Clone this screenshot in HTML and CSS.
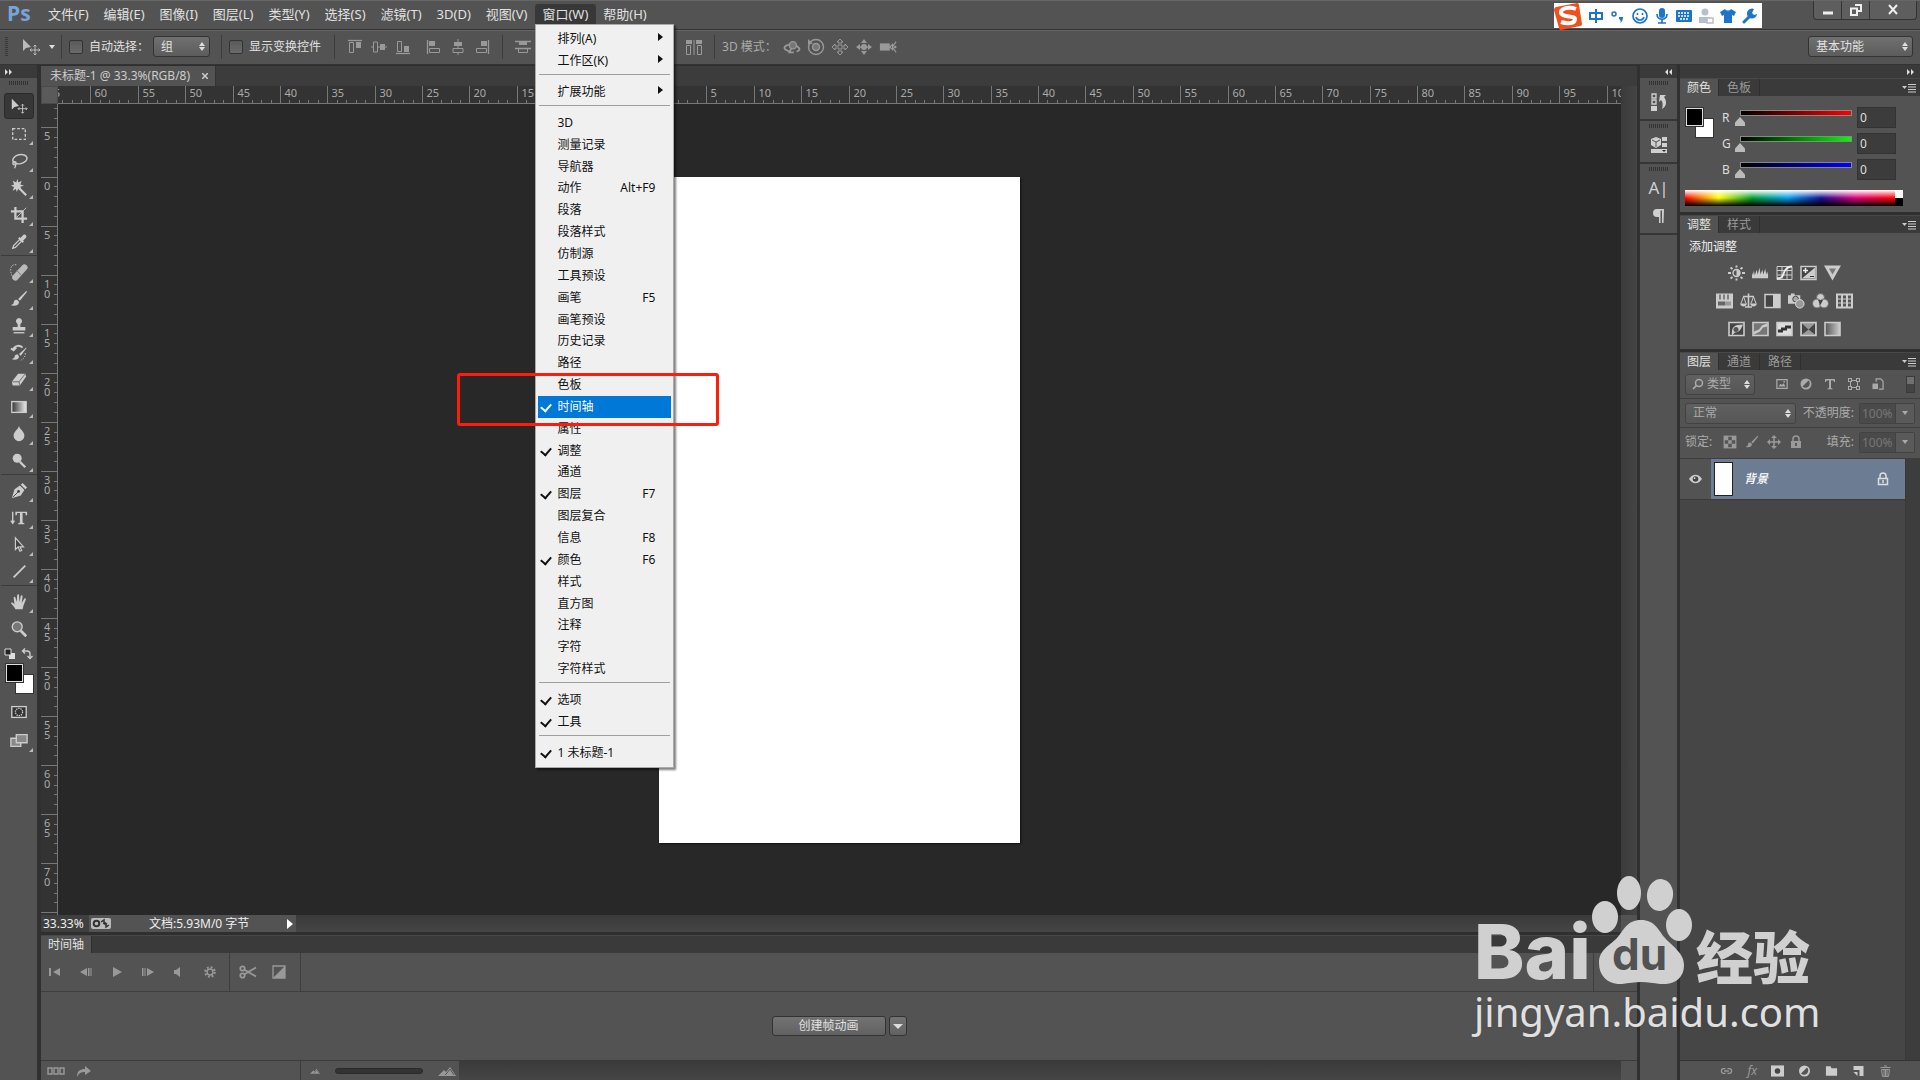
FILE: index.html
```html
<!DOCTYPE html>
<html lang="zh-CN">
<head>
<meta charset="utf-8">
<title>未标题-1 @ 33.3%(RGB/8)</title>
<link rel="stylesheet" href="styles.css">
</head>
<body>
<svg class="sprite" aria-hidden="true">
  <symbol id="i-move" viewBox="0 0 20 20"><path d="M2 2v12l3-3 5-1z" fill="currentColor"/><path d="M14 8v10M9 13h10M12.500 9.500l1.500-1.500 1.500 1.500M12.500 16.500l1.500 1.500 1.500-1.500M10.500 11.500L9 13l1.500 1.500M17.500 11.500L19 13l-1.500 1.500" fill="none" stroke="currentColor"/></symbol>
  <symbol id="i-marquee" viewBox="0 0 20 20"><rect x="3" y="4" width="14" height="12" fill="none" stroke="currentColor" stroke-width="1.500" stroke-dasharray="3 2"/></symbol>
  <symbol id="i-lasso" viewBox="0 0 20 20"><g fill="none" stroke="currentColor" stroke-width="1.600"><ellipse cx="11" cy="8" rx="8" ry="5" transform="rotate(-12 11 8)"/><circle cx="5" cy="12.500" r="1.800"/><path d="M6 14c1 2 0 3-1 4"/></g></symbol>
  <symbol id="i-wand" viewBox="0 0 20 20"><path d="M8 0l1.500 4L13 2l-1.500 4 4 1.500-4 1L13 13l-4-2-1.500 3.500L6.500 11 3 13l1.500-4L1 7.500 4.500 6 3 2l4 2z" fill="currentColor"/><path d="M10 10l8 8" stroke="currentColor" stroke-width="2.500"/></symbol>
  <symbol id="i-crop" viewBox="0 0 20 20"><path d="M6 1v13h13M1 6h13v13" fill="none" stroke="currentColor" stroke-width="2.500"/><path d="M7 13L18 2" stroke="currentColor"/></symbol>
  <symbol id="i-eyedrop" viewBox="0 0 20 20"><path d="M3 17l1-3 7-7 2 2-7 7z" fill="none" stroke="currentColor" stroke-width="1.400"/><path d="M9 6l5 5 1.500-1.500-1-1L18 5c1-2-1-4-3-3l-3.500 3.500-1-1z" fill="currentColor"/></symbol>
  <symbol id="i-heal" viewBox="0 0 20 20"><path d="M6 16L16 5" stroke="currentColor" stroke-width="7" stroke-linecap="round" opacity=".85"/><path d="M7 8l6 6" stroke="#777"/><path d="M7 2C2 1 0 5 1 10s2 5 3 6" fill="none" stroke="currentColor" stroke-dasharray="1.500 1.500"/></symbol>
  <symbol id="i-brush" viewBox="0 0 20 20"><path d="M18 1L9 10l2 2 8-10z" fill="currentColor"/><path d="M8 11c-3-1-4 2-4 4l-3 2c3 1 9 1 9-4z" fill="currentColor"/></symbol>
  <symbol id="i-stamp" viewBox="0 0 20 20"><path d="M10 1a3.500 3.500 0 0 1 3 5l-1.500 2v3H17v4H3v-4h5.500V8L7 6a3.500 3.500 0 0 1 3-5z" fill="currentColor"/><path d="M4 17.500h12" stroke="currentColor" stroke-width="1.500"/></symbol>
  <symbol id="i-history" viewBox="0 0 20 20"><path d="M18 4l-8 7 2 2 6-8z" fill="currentColor"/><path d="M9 12c-3-1-4 1-4 3l-3 2c3 1 8 1 8-3z" fill="currentColor"/><path d="M3 6c3-5 8-5 11-2M1 5l3 2 3-3" fill="none" stroke="currentColor" stroke-width="2"/><path d="M17 10c0 4-1 6-5 8" fill="none" stroke="currentColor" stroke-dasharray="1.500 1.500"/></symbol>
  <symbol id="i-eraser" viewBox="0 0 20 20"><path d="M9 3h8l1 3-7 10H3l-1-4z" fill="currentColor"/><path d="M2.500 12H10l7-9M10 12l1 4" fill="none" stroke="#666"/></symbol>
  <symbol id="i-gradient" viewBox="0 0 20 20"><defs><linearGradient id="g1"><stop stop-color="#333"/><stop offset="1" stop-color="#eee"/></linearGradient></defs><rect x="2" y="4" width="16" height="12" fill="url(#g1)" stroke="currentColor" stroke-width="1.500"/></symbol>
  <symbol id="i-drop" viewBox="0 0 20 20"><path d="M10 1c1 4 6 6 6 11a6 6 0 0 1-12 0c0-5 5-7 6-11z" fill="currentColor"/></symbol>
  <symbol id="i-dodge" viewBox="0 0 20 20"><circle cx="8" cy="7" r="5" fill="currentColor"/><path d="M11 11l6 6" stroke="currentColor" stroke-width="2.500"/></symbol>
  <symbol id="i-pen" viewBox="0 0 20 20"><path d="M2 18L5 8l6-4 5 5-4 6zM12 3l2-2 5 5-2 2z" fill="currentColor"/><path d="M3 17l6-6" stroke="#444"/><circle cx="9.500" cy="10.500" r="1.500" fill="#444"/></symbol>
  <symbol id="i-vtype" viewBox="0 0 20 20"><path d="M3 3v12M1 13l2 3 2-3" fill="none" stroke="currentColor" stroke-width="1.500"/><path d="M6 3h13v4h-1.500L17 4.500h-3V15l2 1v1H9v-1l2-1V4.500H8L7.500 7H6z" fill="currentColor"/></symbol>
  <symbol id="i-arrow" viewBox="0 0 20 20"><path d="M6 2v13l3-3 2 5 2-1-2-4h4z" fill="#444" stroke="currentColor" stroke-width="1.300"/></symbol>
  <symbol id="i-line" viewBox="0 0 20 20"><path d="M4 16L17 3" stroke="currentColor" stroke-width="2"/></symbol>
  <symbol id="i-hand" viewBox="0 0 20 20"><path d="M6 18c-1-3-4-5-5-7 1-1 3 0 4 2L4 5c1-1 2-1 2 0l1.500 5L8 2c1-1 2-1 2 0l.5 8L12 3c1-1 2 0 2 1l-1 7 3-5c1-.5 2 0 1.500 1.500L15 14l-1 4z" fill="currentColor"/></symbol>
  <symbol id="i-zoom" viewBox="0 0 20 20"><circle cx="8" cy="7.500" r="5.500" fill="#777" stroke="currentColor" stroke-width="1.500"/><path d="M12 12l6 6" stroke="currentColor" stroke-width="3"/></symbol>
  <symbol id="i-mini" viewBox="0 0 12 12"><path d="M5 5h6v6H5z" fill="#ddd"/><path d="M1 1h6v6H1z" fill="#222" stroke="#ddd"/></symbol>
  <symbol id="i-swap" viewBox="0 0 12 12"><path d="M2 3h4c2 0 3 1 3 3v4M4 .5L1.500 3 4 5.500M6.500 8L9 10.500 11.500 8" fill="none" stroke="currentColor" stroke-width="1.400"/></symbol>
  <symbol id="i-mask" viewBox="0 0 20 20"><rect x="2" y="4" width="16" height="12" fill="#333" stroke="currentColor" stroke-width="1.500"/><circle cx="10" cy="10" r="4" fill="none" stroke="currentColor" stroke-width="1.500" stroke-dasharray="1.500 1"/></symbol>
  <symbol id="i-screen" viewBox="0 0 20 20"><path d="M1 8h11v9H1z" fill="#888" stroke="currentColor" stroke-width="1.500"/><path d="M7 4h12v9H7z" fill="#888" stroke="currentColor" stroke-width="1.500"/></symbol>
  <symbol id="i-altop" viewBox="0 0 16 16"><path d="M1 1.500h14" stroke="currentColor" stroke-width="1.300"/><path d="M9 3h5v6H9z" fill="currentColor"/><path d="M2.500 3.500h4v10h-4z" fill="none" stroke="currentColor"/></symbol>
  <symbol id="i-almid" viewBox="0 0 16 16"><path d="M0 8h16" stroke="currentColor"/><path d="M9 5h5v6H9z" fill="currentColor"/><path d="M2.500 3h4v10h-4z" fill="#535353" stroke="currentColor"/></symbol>
  <symbol id="i-albot" viewBox="0 0 16 16"><path d="M1 14.500h14" stroke="currentColor" stroke-width="1.300"/><path d="M9 7h5v6H9z" fill="currentColor"/><path d="M2.500 2.500h4v10h-4z" fill="none" stroke="currentColor"/></symbol>
  <symbol id="i-alleft" viewBox="0 0 16 16"><path d="M1.500 1v14" stroke="currentColor" stroke-width="1.300"/><path d="M3 2h6v5H3z" fill="currentColor"/><path d="M3.500 9.500h10v4h-10z" fill="none" stroke="currentColor"/></symbol>
  <symbol id="i-alcen" viewBox="0 0 16 16"><path d="M8 0v16" stroke="currentColor"/><path d="M4 3h8v4H4z" fill="currentColor"/><path d="M3 9.500h10v4H3z" fill="#535353" stroke="currentColor"/></symbol>
  <symbol id="i-alright" viewBox="0 0 16 16"><path d="M14.500 1v14" stroke="currentColor" stroke-width="1.300"/><path d="M7 2h6v5H7z" fill="currentColor"/><path d="M2.500 9.500h10v4h-10z" fill="none" stroke="currentColor"/></symbol>
  <symbol id="i-dist" viewBox="0 0 16 16"><path d="M0 2.500h16M0 9.500h16" stroke="currentColor" stroke-width="1.300"/><path d="M4 3h8v3H4z" fill="currentColor"/><path d="M3.500 10v3.500h9V10" fill="none" stroke="currentColor"/></symbol>
  <symbol id="i-auto" viewBox="0 0 16 16"><path d="M0 1h6v4H0zM10 1h6v4h-6z" fill="currentColor"/><path d="M.5 6.500h4v9h-4zM11.500 6.500h4v9h-4zM8 1v15" fill="none" stroke="currentColor"/></symbol>
  <symbol id="i-orbit" viewBox="0 0 20 16"><circle cx="11" cy="6" r="4" fill="#777" stroke="currentColor" stroke-width="1.500"/><path d="M8 5C2 6 0 9 3 11l4 2M9 10l-2 4h5M15 7c5 3 4 5 0 6" fill="none" stroke="currentColor" stroke-width="2"/></symbol>
  <symbol id="i-roll" viewBox="0 0 18 18"><circle cx="9" cy="9" r="7.500" fill="none" stroke="currentColor" stroke-width="1.400"/><circle cx="9" cy="9" r="3.500" fill="#777" stroke="currentColor" stroke-width="1.400"/><path d="M1 1v5h5z" fill="currentColor"/></symbol>
  <symbol id="i-pan" viewBox="0 0 18 18"><path d="M9 1l3 3h-2v4h4V6l3 3-3 3v-2h-4v4h2l-3 3-3-3h2v-4H4v2L1 9l3-3v2h4V4H6z" fill="none" stroke="currentColor"/></symbol>
  <symbol id="i-slide" viewBox="0 0 18 18"><path d="M9 1l3 4H6zM9 17l3-4H6zM1 9l4-3v6zM17 9l-4-3v6z" fill="currentColor"/><circle cx="9" cy="9" r="3" fill="currentColor"/><path d="M2 9h14" stroke="currentColor" stroke-width="1.500"/></symbol>
  <symbol id="i-cam" viewBox="0 0 20 16"><path d="M1 4h11v8H1z" fill="currentColor"/><path d="M12 8l3-3v6zM19 2l-4 6 4 6" fill="none" stroke="currentColor" stroke-width="1.300"/><circle cx="18" cy="8" r="1.500" fill="currentColor"/></symbol>
  <symbol id="i-list" viewBox="0 0 14 10"><path d="M0 3h5L2.500 6z" fill="currentColor"/><path d="M6 1.500h8M6 4h8M6 6.500h8M6 9h8" stroke="currentColor"/></symbol>
  <symbol id="i-hist" viewBox="0 0 16 18"><path d="M1 1h4v4H1zM1 7h4v4H1z" fill="none" stroke="currentColor" stroke-width="1.300"/><path d="M0 13h6v5H0zM9 2h6l-2 2c3 4 3 9-2 12 1-4 1-7-1-9l-2 2z" fill="currentColor"/></symbol>
  <symbol id="i-props" viewBox="0 0 16 18"><path d="M5 1l5 2v6l-5 3-5-3V3z" fill="currentColor"/><path d="M1 4l4 2 4-2M5 6v5" stroke="#555" fill="none"/><path d="M11 1h5v4h-5zM11 7h5v4h-5zM0 13h16v4H0z" fill="currentColor"/><path d="M11 14h4l-2 2z" fill="#333"/></symbol>
  <symbol id="i-para" viewBox="0 0 16 16"><path d="M13 1H6a4 4 0 0 0 0 8h2v6h1.500V2.500h1.500V15h1.500z" fill="currentColor"/></symbol>
  <symbol id="a-sun" viewBox="0 0 17 15"><circle cx="8.500" cy="7.500" r="3.500" fill="#555" stroke="currentColor" stroke-width="1.400"/><path d="M8.500 4a3.500 3.500 0 0 1 0 7z" fill="currentColor"/><path d="M8.500 0v2M8.500 13v2M0 7.500h3M14 7.500h3M2.500 2l2 1.500M14.500 2l-2 1.500M2.500 13l2-1.500M14.500 13l-2-1.500" stroke="currentColor" stroke-width="2"/></symbol>
  <symbol id="a-levels" viewBox="0 0 18 15"><path d="M0 13V7l1 3 1-5 1 5 2-6 1 5 2-7 1 7 2-5 1 5 2-6 1 6 1-3 1 3v4z" fill="currentColor"/></symbol>
  <symbol id="a-curves" viewBox="0 0 17 15"><path d="M1 1h15v13H1zM1 5h15M1 9.500h15M6 1v13M11 1v13" fill="none" stroke="currentColor"/><path d="M1 13c7 0 6-5 8-8s4-4 7-4" fill="none" stroke="#eee" stroke-width="1.800"/></symbol>
  <symbol id="a-expo" viewBox="0 0 17 15"><path d="M1 1h15v13H1z" fill="#444" stroke="currentColor" stroke-width="1.500"/><path d="M2 13L15 2v11z" fill="currentColor"/><path d="M3 5h5M5.500 2.500v5M10 11h4" stroke="#eee" stroke-width="1.500"/><path d="M10 11h4" stroke="#333"/></symbol>
  <symbol id="a-vib" viewBox="0 0 17 15"><path d="M0 0h17L8.500 15z" fill="currentColor"/><path d="M5 3h7l-3.500 6z" fill="#777"/></symbol>
  <symbol id="a-hue" viewBox="0 0 17 15"><path d="M0 0h17v15H0z" fill="currentColor"/><path d="M4 1v5M8 1v5M12 1v5" stroke="#666" stroke-width="1.500"/><path d="M2 8h7v4H2z" fill="#666"/><path d="M9 8h6v4H9z" fill="#999"/></symbol>
  <symbol id="a-bal" viewBox="0 0 17 15"><path d="M8.500 0v13M3 3h11M5 13.500h7" stroke="currentColor" stroke-width="1.600"/><path d="M3.500 3L1 10M3.500 3L6 10M13.500 3L11 10M13.500 3L16 10" stroke="currentColor"/><path d="M0 10h7c-1 4-6 4-7 0zM10 10h7c-1 4-6 4-7 0z" fill="currentColor"/></symbol>
  <symbol id="a-bw" viewBox="0 0 17 15"><path d="M1 1h15v13H1z" fill="#444" stroke="currentColor" stroke-width="1.500"/><path d="M9 1h7v13H9z" fill="currentColor"/></symbol>
  <symbol id="a-photo" viewBox="0 0 18 16"><path d="M0 2h3V0h4v2h6v9H0z" fill="currentColor"/><circle cx="8" cy="6" r="3" fill="#aaa" stroke="#444"/><circle cx="12.500" cy="11" r="4.500" fill="#999" stroke="#ddd"/></symbol>
  <symbol id="a-mix" viewBox="0 0 17 16"><g fill="currentColor" stroke="#666"><circle cx="8.500" cy="4.500" r="4"/><circle cx="5" cy="10.500" r="4.500"/><circle cx="12" cy="10.500" r="4.500"/></g><path d="M6 7h5l-2.500 5z" fill="#444"/></symbol>
  <symbol id="a-grid" viewBox="0 0 17 15"><path d="M0 0h17v15H0z" fill="currentColor"/><path d="M2 2h3v3H2zM7 2h3v3H7zM12 2h3v3h-3zM2 6h3v3H2zM7 6h3v3H7zM12 6h3v3h-3zM2 10h3v3H2zM7 10h3v3H7zM12 10h3v3h-3z" fill="#555"/></symbol>
  <symbol id="a-inv" viewBox="0 0 17 15"><path d="M1 1h15v13H1z" fill="#444" stroke="currentColor" stroke-width="1.600"/><path d="M4 14c-1-8 2-11 11-11-2 5-4 8-8 8z" fill="currentColor"/><circle cx="8" cy="8" r="2.500" fill="#555"/></symbol>
  <symbol id="a-post" viewBox="0 0 17 15"><path d="M1 1h15v13H1z" fill="#777" stroke="currentColor" stroke-width="1.600"/><path d="M2 10l5-2 3-4 5-2v3l-4 1-3 4-6 3z" fill="currentColor"/></symbol>
  <symbol id="a-thr" viewBox="0 0 17 15"><path d="M1 1h15v13H1z" fill="#ddd" stroke="currentColor" stroke-width="1.600"/><path d="M2 8h3V6h4V4h6v3h-4v2H7v2H2z" fill="#333"/></symbol>
  <symbol id="a-sel" viewBox="0 0 17 15"><path d="M1 1h15v13H1z" fill="#999" stroke="currentColor" stroke-width="1.600"/><path d="M2 2l6.500 6L2 13zM15 2L8.500 8l6.500 5z" fill="#444"/></symbol>
  <symbol id="a-map" viewBox="0 0 17 15"><defs><linearGradient id="g2"><stop stop-color="#555"/><stop offset="1" stop-color="#ccc"/></linearGradient></defs><path d="M1 1h15v13H1z" fill="url(#g2)" stroke="currentColor" stroke-width="1.600"/></symbol>
  <symbol id="l-pic" viewBox="0 0 14 12"><path d="M1 1h12v10H1z" fill="none" stroke="currentColor" stroke-width="1.400"/><path d="M3 9l2-3 2 1 2-2 2 4z" fill="currentColor"/><circle cx="9.500" cy="3.500" r="1" fill="currentColor"/></symbol>
  <symbol id="l-adj" viewBox="0 0 12 12"><circle cx="6" cy="6" r="5.500" fill="currentColor"/><path d="M2.500 8.500l6-6a4 4 0 0 1-6 6z" fill="#555"/></symbol>
  <symbol id="l-type" viewBox="0 0 12 12"><path d="M1 1h10v3h-1l-.5-1.500H7V10l1.500.5v.8h-5v-.8L5 10V2.500H2.500L2 4H1z" fill="currentColor"/></symbol>
  <symbol id="l-shape" viewBox="0 0 12 12"><path d="M2.500 2.500h7v7h-7z" fill="none" stroke="currentColor"/><path d="M0 0h4v4H0zM8 0h4v4H8zM0 8h4v4H0zM8 8h4v4H8z" fill="currentColor"/><path d="M1 1h2v2H1zM9 1h2v2H9zM1 9h2v2H1zM9 9h2v2H9z" fill="#535353"/></symbol>
  <symbol id="l-smart" viewBox="0 0 12 13"><path d="M4 4V1h5l2.500 2.500V12H7" fill="none" stroke="currentColor" stroke-width="1.300"/><path d="M0 6h6v6H0z" fill="currentColor"/></symbol>
  <symbol id="l-check" viewBox="0 0 12 12"><path d="M.5.500h11v11H.5z" fill="currentColor"/><path d="M4.500 1.500h3v3h-3zM1.500 4.500h3v3h-3zM7.500 4.500h3v3h-3zM4.500 7.500h3v3h-3z" fill="#555"/></symbol>
  <symbol id="l-move" viewBox="0 0 14 14"><path d="M7 1v12M1 7h12" stroke="currentColor" stroke-width="1.500"/><path d="M7 0l3 3H4zM7 14l3-3H4zM0 7l3-3v6zM14 7l-3-3v6z" fill="currentColor"/></symbol>
  <symbol id="i-lock" viewBox="0 0 12 14"><path d="M3 6V4a3 3 0 0 1 6 0v2" fill="none" stroke="currentColor" stroke-width="1.500"/><path d="M1 6h10v7H1z" fill="currentColor"/><path d="M6 8v3" stroke="#444" stroke-width="1.500"/></symbol>
  <symbol id="i-lockline" viewBox="0 0 12 14"><path d="M3 6V4a3 3 0 0 1 6 0v2" fill="none" stroke="currentColor" stroke-width="1.500"/><path d="M1.500 6.500h9v6h-9zM6 8v3" fill="none" stroke="currentColor" stroke-width="1.500"/></symbol>
  <symbol id="i-eye" viewBox="0 0 14 10"><path d="M0 5c4-6 10-6 14 0-4 6-10 6-14 0z" fill="currentColor"/><circle cx="7" cy="5" r="3" fill="#444"/><circle cx="6" cy="4" r="1" fill="#ddd"/></symbol>
  <symbol id="i-search" viewBox="0 0 12 12"><circle cx="7" cy="5" r="3.500" fill="none" stroke="currentColor" stroke-width="1.500"/><path d="M4.500 7.500L1 11" stroke="currentColor" stroke-width="1.700"/></symbol>
  <symbol id="b-link" viewBox="0 0 14 12"><path d="M6 3.500H4a2.500 2.500 0 0 0 0 5h2M8 3.500h2a2.500 2.500 0 0 1 0 5H8M4.500 6h5" fill="none" stroke="currentColor" stroke-width="1.400"/></symbol>
  <symbol id="b-mask" viewBox="0 0 14 12"><path d="M0 0h14v12H0z" fill="currentColor"/><circle cx="7" cy="6" r="3" fill="#444"/></symbol>
  <symbol id="b-folder" viewBox="0 0 14 12"><path d="M1 1h5l1 2h6v8H1z" fill="currentColor"/></symbol>
  <symbol id="b-new" viewBox="0 0 12 12"><path d="M1 1h10v10H7V5H1z" fill="currentColor"/><path d="M1 7h4v4z" fill="currentColor"/></symbol>
  <symbol id="b-trash" viewBox="0 0 12 12"><path d="M1 2.500h10M4.500 1h3M2 4.500h8l-1 7H3zM4.500 5v6M6 5v6M7.500 5v6" fill="none" stroke="currentColor"/></symbol>
  <symbol id="t-first" viewBox="0 0 14 10"><path d="M1 1h2v8H1zM12 1v8L5 5z" fill="currentColor"/></symbol>
  <symbol id="t-prev" viewBox="0 0 14 10"><path d="M8 1v8L1 5zM9 1h1.500v8H9zM11.500 1h1v8h-1z" fill="currentColor"/></symbol>
  <symbol id="t-play" viewBox="0 0 14 10"><path d="M3 0l9 5-9 5z" fill="currentColor"/></symbol>
  <symbol id="t-next" viewBox="0 0 14 10"><path d="M1 1h1.500v8H1zM3.500 1h1v8h-1zM6 1l7 4-7 4z" fill="currentColor"/></symbol>
  <symbol id="t-sound" viewBox="0 0 14 10"><path d="M2 3h2l4-3v10L4 7H2z" fill="currentColor"/></symbol>
  <symbol id="t-gear" viewBox="0 0 14 14"><circle cx="7" cy="7" r="3" fill="none" stroke="currentColor" stroke-width="1.500"/><circle cx="7" cy="7" r="4.800" fill="none" stroke="currentColor" stroke-width="2" stroke-dasharray="1.900 1.870"/></symbol>
  <symbol id="t-cut" viewBox="0 0 18 14"><g fill="none" stroke="currentColor" stroke-width="1.800"><circle cx="3.500" cy="3.500" r="2.200"/><circle cx="3.500" cy="10.500" r="2.200"/><path d="M5 4.500l12 7M5 9.500l12-7"/></g></symbol>
  <symbol id="t-trans" viewBox="0 0 14 14"><path d="M1 1h12v12H1z" fill="none" stroke="currentColor" stroke-width="1.300"/><path d="M13 1v12H1z" fill="currentColor"/></symbol>
  <symbol id="t-frames" viewBox="0 0 18 8"><path d="M1 1h4v6H1zM7 1h4v6H7zM13 1h4v6h-4z" fill="none" stroke="currentColor" stroke-width="1.400"/></symbol>
  <symbol id="t-share" viewBox="0 0 14 12"><path d="M0 12c0-6 3-8 8-8V1l6 5-6 4V7c-4 0-6 1-8 5z" fill="currentColor"/></symbol>
  <symbol id="t-mtn" viewBox="0 0 18 10"><path d="M0 10l6-6 2 2 4-5 6 9z" fill="currentColor"/><path d="M7 9l2-2 3-4 4 6" fill="none" stroke="#555"/></symbol>
</svg>

<header class="menubar">
  <span class="logo">Ps</span>
  <nav class="menus">
    <button>文件(F)</button><button>编辑(E)</button><button>图像(I)</button><button>图层(L)</button><button>类型(Y)</button><button>选择(S)</button><button>滤镜(T)</button><button>3D(D)</button><button>视图(V)</button>
    <div class="menu-host">
      <button class="open" aria-expanded="true">窗口(W)</button>
      <div class="dropdown" role="menu">
        <button class="item sub">排列(A)</button>
        <button class="item sub">工作区(K)</button>
        <hr>
        <button class="item sub">扩展功能</button>
        <hr>
        <div class="panels">
          <button class="item">3D</button>
          <button class="item">测量记录</button>
          <button class="item">导航器</button>
          <button class="item">动作<kbd>Alt+F9</kbd></button>
          <button class="item">段落</button>
          <button class="item">段落样式</button>
          <button class="item">仿制源</button>
          <button class="item">工具预设</button>
          <button class="item">画笔<kbd>F5</kbd></button>
          <button class="item">画笔预设</button>
          <button class="item">历史记录</button>
          <button class="item">路径</button>
          <button class="item">色板</button>
          <button class="item on hot">时间轴</button>
          <button class="item">属性</button>
          <button class="item on">调整</button>
          <button class="item">通道</button>
          <button class="item on">图层<kbd>F7</kbd></button>
          <button class="item">图层复合</button>
          <button class="item">信息<kbd>F8</kbd></button>
          <button class="item on">颜色<kbd>F6</kbd></button>
          <button class="item">样式</button>
          <button class="item">直方图</button>
          <button class="item">注释</button>
          <button class="item">字符</button>
          <button class="item">字符样式</button>
        </div>
        <hr>
        <button class="item on">选项</button>
        <button class="item on">工具</button>
        <hr>
        <button class="item on">1 未标题-1</button>
        <div class="marker"></div>
      </div>
    </div>
    <button>帮助(H)</button>
  </nav>
  <div class="ime">
    <svg class="sogou" viewBox="0 0 28 28"><path d="M2 5L23 1q2 0 2 2l3 19q0 2-2 2L7 28q-2 0-2-2L0 8q0-2 2-3z" fill="#f0501e"/><path d="M22 7C14 4 6 7 7 11c1 5 14 2 14 6 0 5-8 5-14 3" fill="none" stroke="#fff" stroke-width="4"/></svg>
    <svg viewBox="0 0 16 16"><path d="M2 5h12v6H2zM8 1v14" fill="none" stroke="currentColor" stroke-width="2"/></svg>
    <svg viewBox="0 0 16 16"><circle cx="4" cy="6" r="2" fill="none" stroke="currentColor" stroke-width="1.500"/><path d="M9 9h4c0 3-1 5-3 6 1-2 1-3-1-4z" fill="currentColor"/></svg>
    <svg viewBox="0 0 16 16"><circle cx="8" cy="8" r="7" fill="none" stroke="currentColor" stroke-width="1.700"/><path d="M4 9c1 4 7 4 8 0M5.500 5v2M10.500 5v2" fill="none" stroke="currentColor" stroke-width="1.600"/></svg>
    <svg viewBox="0 0 16 16"><rect x="5" width="6" height="10" rx="3" fill="currentColor"/><path d="M3 6c0 7 10 7 10 0M8 12v3M4 15h8" fill="none" stroke="currentColor" stroke-width="1.700"/></svg>
    <svg viewBox="0 0 16 16"><rect y="2" width="16" height="12" rx="1" fill="currentColor"/><path d="M2 5h12M2 8h12M4 11h8" stroke="#fff" stroke-width="1.500" stroke-dasharray="2 1"/></svg>
    <svg viewBox="0 0 16 16" class="dim"><circle cx="7" cy="4" r="3.500" fill="currentColor"/><path d="M1 15V9h11v6z" fill="currentColor"/><rect x="9" y="10" width="6" height="5" fill="#fff" stroke="currentColor" stroke-width="1.500"/></svg>
    <svg viewBox="0 0 16 16"><path d="M5 1c1 2 5 2 6 0l5 3-2 4-2-1v8H4V7L2 8 0 4z" fill="currentColor"/></svg>
    <svg viewBox="0 0 16 16"><path d="M2 14l7-7" stroke="currentColor" stroke-width="3" stroke-linecap="round"/><path d="M12 1a5 5 0 1 0 3 5l-3 1-2-2z" fill="currentColor"/></svg>
  </div>
  <div class="winbtns">
    <button aria-label="最小化"><svg viewBox="0 0 12 12"><path d="M1 9h10" stroke="currentColor" stroke-width="3"/></svg></button>
    <button aria-label="还原"><svg viewBox="0 0 12 12"><path d="M5 1h6v6H8M1 4.500h6V11H1z" fill="none" stroke="currentColor" stroke-width="2"/></svg></button>
    <button aria-label="关闭"><svg viewBox="0 0 12 12"><path d="M2 1l8 9M10 1l-8 9" stroke="currentColor" stroke-width="2"/></svg></button>
  </div>
</header>

<div class="options">
  <i class="grip-v"></i>
  <button class="tool-now" aria-label="移动工具"><svg><use href="#i-move"/></svg><i class="tri"></i></button>
  <i class="sep"></i>
  <label class="check"><input type="checkbox">自动选择：</label>
  <span class="select group"><select aria-label="自动选择对象"><option>组</option></select></span>
  <i class="sep"></i>
  <label class="check transform"><input type="checkbox">显示变换控件</label>
  <i class="sep"></i>
  <div class="aligns"><svg><use href="#i-altop"/></svg><svg><use href="#i-almid"/></svg><svg><use href="#i-albot"/></svg></div>
  <div class="aligns"><svg><use href="#i-alleft"/></svg><svg><use href="#i-alcen"/></svg><svg><use href="#i-alright"/></svg></div>
  <i class="sep"></i>
  <div class="aligns"><svg><use href="#i-dist"/></svg><svg><use href="#i-dist"/></svg><svg><use href="#i-dist"/></svg></div>
  <div class="aligns last"><svg><use href="#i-dist"/></svg><svg><use href="#i-dist"/></svg><svg><use href="#i-dist"/></svg></div>
  <i class="sep"></i>
  <div class="aligns"><svg><use href="#i-auto"/></svg></div>
  <i class="sep"></i>
  <span class="mode3d">3D 模式：</span>
  <div class="aligns wide"><svg><use href="#i-orbit"/></svg><svg><use href="#i-roll"/></svg><svg><use href="#i-pan"/></svg><svg><use href="#i-slide"/></svg><svg><use href="#i-cam"/></svg></div>
  <span class="select space"><select aria-label="工作区"><option>基本功能</option></select></span>
</div>

<div class="workspace">
  <aside class="tools">
    <div class="strip"><svg viewBox="0 0 8 6"><path d="M0 0l3 3-3 3zM4 0l3 3-3 3z" fill="currentColor"/></svg></div>
    <i class="grip-h"></i>
    <div class="toolset">
      <button class="tool active solo" aria-label="移动"><svg><use href="#i-move"/></svg></button>
      <button class="tool" aria-label="选框"><svg><use href="#i-marquee"/></svg></button>
      <button class="tool" aria-label="套索"><svg><use href="#i-lasso"/></svg></button>
      <button class="tool" aria-label="魔棒"><svg><use href="#i-wand"/></svg></button>
      <button class="tool" aria-label="裁剪"><svg><use href="#i-crop"/></svg></button>
      <button class="tool" aria-label="吸管"><svg><use href="#i-eyedrop"/></svg></button>
    </div>
    <div class="toolset">
      <button class="tool" aria-label="修复画笔"><svg><use href="#i-heal"/></svg></button>
      <button class="tool" aria-label="画笔"><svg><use href="#i-brush"/></svg></button>
      <button class="tool" aria-label="图章"><svg><use href="#i-stamp"/></svg></button>
      <button class="tool" aria-label="历史画笔"><svg><use href="#i-history"/></svg></button>
      <button class="tool" aria-label="橡皮擦"><svg><use href="#i-eraser"/></svg></button>
      <button class="tool" aria-label="渐变"><svg><use href="#i-gradient"/></svg></button>
      <button class="tool" aria-label="模糊"><svg><use href="#i-drop"/></svg></button>
      <button class="tool" aria-label="减淡"><svg><use href="#i-dodge"/></svg></button>
    </div>
    <div class="toolset">
      <button class="tool" aria-label="钢笔"><svg><use href="#i-pen"/></svg></button>
      <button class="tool" aria-label="直排文字"><svg><use href="#i-vtype"/></svg></button>
      <button class="tool" aria-label="路径选择"><svg><use href="#i-arrow"/></svg></button>
      <button class="tool" aria-label="直线"><svg><use href="#i-line"/></svg></button>
    </div>
    <div class="toolset plain">
      <button class="tool" aria-label="抓手"><svg><use href="#i-hand"/></svg></button>
      <button class="tool solo" aria-label="缩放"><svg><use href="#i-zoom"/></svg></button>
    </div>
    <div class="mini"><svg><use href="#i-mini"/></svg><svg><use href="#i-swap"/></svg></div>
    <div class="swatches"><i class="back"></i><i class="fore"></i></div>
    <div class="toolset plain modes">
      <button class="tool solo" aria-label="快速蒙版"><svg><use href="#i-mask"/></svg></button>
      <button class="tool" aria-label="屏幕模式"><svg><use href="#i-screen"/></svg></button>
    </div>
  </aside>

  <main class="center">
    <div class="doctabs"><div class="doctab">未标题-1 @ 33.3%(RGB/8)<button aria-label="关闭文档"><svg viewBox="0 0 6 6"><path d="M0 0l6 6M6 0L0 6" stroke="currentColor" stroke-width="1.500"/></svg></button></div></div>
    <div class="doc">
      <i class="corner"></i>
      <svg class="ruler" id="ruler-x"></svg>
      <i class="vscroll"></i>
      <svg class="ruler" id="ruler-y"></svg>
      <div class="canvas"><div class="page" id="page"></div></div>
    </div>
    <div class="status">
      <span class="pct">33.33%</span>
      <div class="info"><svg viewBox="0 0 20 11"><rect width="20" height="11" rx="2" fill="#bbb"/><circle cx="5.500" cy="5.500" r="2.800" fill="none" stroke="#333" stroke-width="2"/><path d="M10 4l3-2v2l3 2M18 7l-3 2V7l-3-2" fill="none" stroke="#333" stroke-width="1.500"/></svg><span>文档:5.93M/0 字节</span><i class="play"></i></div>
      <i class="fill"></i><i class="scorner"></i>
    </div>
    <section class="timeline">
      <div class="tabs"><button class="tab on">时间轴</button><svg class="pmenu"><use href="#i-list"/></svg></div>
      <div class="controls">
        <div class="transport"><svg><use href="#t-first"/></svg><svg><use href="#t-prev"/></svg><svg><use href="#t-play"/></svg><svg><use href="#t-next"/></svg><svg><use href="#t-sound"/></svg><svg class="big"><use href="#t-gear"/></svg></div>
        <div class="edit"><svg class="cut"><use href="#t-cut"/></svg><svg class="big"><use href="#t-trans"/></svg></div>
        <div class="track"></div>
      </div>
      <div class="tbody"><button class="create">创建帧动画</button><button class="create more" aria-label="更多"><i class="tri"></i></button></div>
      <div class="tfoot">
        <div class="tf-left"><svg class="frames"><use href="#t-frames"/></svg><svg><use href="#t-share"/></svg></div>
        <div class="tf-zoom"><svg class="small"><use href="#t-mtn"/></svg><i class="rail"></i><svg class="large"><use href="#t-mtn"/></svg></div>
        <i class="fill"></i><i class="scorner"></i>
      </div>
    </section>
  </main>

  <aside class="iconcol">
    <div class="strip"><svg viewBox="0 0 8 6"><path d="M4 0L1 3l3 3zM8 0L5 3l3 3z" fill="currentColor"/></svg></div>
    <div class="icgroup"><i class="grip-h"></i><button aria-label="历史记录"><svg><use href="#i-hist"/></svg></button></div>
    <div class="icgroup"><i class="grip-h"></i><button aria-label="属性"><svg><use href="#i-props"/></svg></button></div>
    <div class="icgroup"><i class="grip-h"></i><button class="char" aria-label="字符">A|</button><button aria-label="段落"><svg><use href="#i-para"/></svg></button></div>
  </aside>

  <aside class="dock">
    <div class="strip"><svg viewBox="0 0 8 6"><path d="M0 0l3 3-3 3zM4 0l3 3-3 3z" fill="currentColor"/></svg></div>
    <section class="panel color">
      <div class="tabs"><button class="tab on">颜色</button><button class="tab">色板</button><svg class="pmenu"><use href="#i-list"/></svg></div>
      <div class="mix">
        <div class="swatches"><i class="back"></i><i class="fore"></i></div>
        <div class="sliders">
          <div class="chan"><label for="r">R</label><input class="red" id="r" type="range" min="0" max="255" value="0"><input type="text" value="0" aria-label="R 值"></div>
          <div class="chan"><label for="g">G</label><input class="green" id="g" type="range" min="0" max="255" value="0"><input type="text" value="0" aria-label="G 值"></div>
          <div class="chan"><label for="b">B</label><input class="blue" id="b" type="range" min="0" max="255" value="0"><input type="text" value="0" aria-label="B 值"></div>
        </div>
      </div>
      <div class="spectrum"><i class="hues"></i><i class="bw"></i></div>
    </section>
    <section class="panel adjust">
      <div class="tabs"><button class="tab on">调整</button><button class="tab">样式</button><svg class="pmenu"><use href="#i-list"/></svg></div>
      <p>添加调整</p>
      <div class="adj"><svg><use href="#a-sun"/></svg><svg><use href="#a-levels"/></svg><svg><use href="#a-curves"/></svg><svg><use href="#a-expo"/></svg><svg><use href="#a-vib"/></svg></div>
      <div class="adj"><svg><use href="#a-hue"/></svg><svg><use href="#a-bal"/></svg><svg><use href="#a-bw"/></svg><svg><use href="#a-photo"/></svg><svg><use href="#a-mix"/></svg><svg><use href="#a-grid"/></svg></div>
      <div class="adj"><svg><use href="#a-inv"/></svg><svg><use href="#a-post"/></svg><svg><use href="#a-thr"/></svg><svg><use href="#a-sel"/></svg><svg><use href="#a-map"/></svg></div>
    </section>
    <section class="panel layers">
      <div class="tabs"><button class="tab on">图层</button><button class="tab">通道</button><button class="tab">路径</button><svg class="pmenu"><use href="#i-list"/></svg></div>
      <div class="lrow filter">
        <span class="select kind"><svg><use href="#i-search"/></svg><select aria-label="筛选类型"><option>类型</option></select></span>
        <div class="kinds"><svg><use href="#l-pic"/></svg><svg><use href="#l-adj"/></svg><svg><use href="#l-type"/></svg><svg><use href="#l-shape"/></svg><svg><use href="#l-smart"/></svg></div>
        <i class="toggle"></i>
      </div>
      <div class="lrow">
        <span class="select blend"><select aria-label="混合模式"><option>正常</option></select></span>
        <label for="op">不透明度:</label>
        <span class="num"><input id="op" type="text" value="100%"><button aria-label="不透明度滑块"><i class="tri"></i></button></span>
      </div>
      <div class="lrow lockrow">
        <span>锁定:</span>
        <div class="locks"><svg><use href="#l-check"/></svg><svg><use href="#i-brush"/></svg><svg><use href="#l-move"/></svg><svg><use href="#i-lock"/></svg></div>
        <label for="fl">填充:</label>
        <span class="num"><input id="fl" type="text" value="100%"><button aria-label="填充滑块"><i class="tri"></i></button></span>
      </div>
      <div class="list">
        <div class="layer">
          <button class="eye" aria-label="可见性"><svg><use href="#i-eye"/></svg></button>
          <div class="layer-main"><i class="thumb"></i><em>背景</em><svg><use href="#i-lockline"/></svg></div>
        </div>
        <i class="lscroll"></i>
      </div>
      <div class="lfoot"><svg class="off"><use href="#b-link"/></svg><span class="fx">fx</span><svg><use href="#b-mask"/></svg><svg><use href="#l-adj"/></svg><svg><use href="#b-folder"/></svg><svg><use href="#b-new"/></svg><svg class="off"><use href="#b-trash"/></svg></div>
    </section>
  </aside>
</div>

<div class="watermark">
  <div class="wm-top">
    <span class="bai">Bai</span>
    <div class="paw"><svg viewBox="0 0 100 108"><g fill="currentColor"><ellipse cx="13" cy="41" rx="13" ry="16"/><ellipse cx="37" cy="17" rx="12" ry="17"/><ellipse cx="68" cy="19" rx="13" ry="16" transform="rotate(8 68 19)"/><ellipse cx="87" cy="49" rx="13" ry="16"/><path d="M49 44c14 0 17 10 24 18 8 9 19 15 19 27 0 15-12 20-24 19-7-1-12-2-19-2s-12 1-19 2C17 109 7 101 7 87c0-13 10-17 18-25 7-8 10-18 24-18z"/></g></svg><span>du</span></div>
    <span class="jy">经验</span>
  </div>
  <div class="url">jingyan.baidu.com</div>
</div>
<script src="rulers.js"></script>
</body>
</html>
```

FILE: styles.css
```css
* { box-sizing: border-box; }
html, body { height: 100%; }
body {
  margin: 0;
  display: flex;
  flex-direction: column;
  overflow: hidden;
  position: relative;
  background: #535353;
  color: #e0e0e0;
  font: 12px/16px "Noto Sans", "Noto Sans CJK SC", sans-serif;
}
button, input, select, kbd { font: inherit; color: inherit; }
button { border: 0; padding: 0; background: none; }
svg { display: block; flex: none; width: 16px; height: 16px; }
i { display: block; flex: none; }
.sprite { position: absolute; width: 0; height: 0; }
.tri { width: 0; height: 0; border: 3px solid transparent; border-top: 4px solid #ddd; border-bottom: 0; }

/* menu bar */
.menubar { flex: none; display: flex; align-items: flex-start; height: 30px; border-top: 1px solid #666; border-bottom: 1px solid #333; }
.logo { width: 41px; padding-left: 7px; font: bold 21px/24px "Open Sans", sans-serif; color: #77a5d8; }
.menus { display: flex; padding-top: 3px; font-size: 13px; line-height: 20px; }
.menus > button, .menu-host > button { display: block; height: 20px; padding: 0 8px 0 7px; white-space: nowrap; }
.menu-host { position: relative; }
.open { background: #383838; border-radius: 3px 3px 0 0; }
.dropdown {
  position: absolute;
  z-index: 5;
  top: 20px;
  left: 0;
  width: 139px;
  padding: 3px 2px;
  background: #f0f0f0;
  border: 1px solid #aaa;
  box-shadow: 2px 2px 2px rgba(0, 0, 0, .5);
  color: #111;
  font-size: 12px;
  line-height: 16px;
}
.item { position: relative; display: flex; align-items: center; width: 100%; height: 22px; padding: 0 16px 0 19px; }
.item kbd { margin-left: auto; }
.item.sub::after { content: ""; margin: 0 -8px 4px auto; border: 4px solid transparent; border-left: 5px solid #111; border-right: 0; }
.item.on::before { content: ""; position: absolute; left: 3px; top: 7px; width: 8px; height: 5px; border: solid currentColor; border-width: 0 0 2px 2px; transform: rotate(-50deg); }
.hot { background: #0078d7; color: #fff; }
.panels { display: grid; grid-auto-rows: 1fr; height: 568px; }
.panels .item { height: auto; }
.dropdown hr { height: 1px; margin: 2px 1px 6px; border: 0; background: #a0a0a0; }
.marker { position: absolute; top: 348px; left: -79px; width: 262px; height: 53px; border: 3px solid #fd1d0c; border-radius: 3px; }

.ime { display: flex; align-items: center; gap: 6px; height: 25px; margin: 2px 51px 0 auto; padding-right: 4px; background: #fff; color: #1c75c8; }
.ime .sogou { width: 28px; height: 28px; }
.ime .dim { color: #b4bfd0; }
.winbtns { display: flex; margin-right: 3px; border: 1px solid #333; border-top: 0; border-radius: 0 0 4px 4px; background: #5e5e5e; }
.winbtns button { display: grid; place-items: center; width: 28px; height: 18px; border-right: 1px solid #333; color: #eee; }
.winbtns button:last-child { width: 46px; border: 0; }
.winbtns svg { width: 12px; height: 12px; }

/* options bar */
.options { flex: none; display: flex; align-items: center; height: 35px; padding: 0 7px 2px 5px; border-top: 1px solid #666; border-bottom: 1px solid #333; }
.grip-v { width: 3px; height: 20px; background: repeating-linear-gradient(#3a3a3a 0 1px, transparent 1px 2px); }
.tool-now { flex: none; display: flex; align-items: center; gap: 8px; width: 40px; margin-left: 13px; color: #bbb; }
.tool-now svg { width: 20px; height: 20px; }
.options .sep { width: 1px; height: 24px; background: #3c3c3c; margin: 0 7px; }
.options .tool-now + .sep { margin-left: 0; }
.check { display: flex; align-items: center; gap: 6px; white-space: nowrap; }
.check input { appearance: none; width: 14px; height: 14px; margin: 0; border: 1px solid #333; border-radius: 2px; background: linear-gradient(#5a5a5a, #6a6a6a); }
.transform { margin-right: 6px; }
.select { position: relative; display: flex; align-items: center; height: 21px; border: 1px solid #333; border-radius: 3px; background: linear-gradient(#707070, #5c5c5c); }
.select select { appearance: none; width: 100%; height: 19px; padding: 0 7px; border: 0; background: none; outline: 0; }
.select::before, .select::after { content: ""; position: absolute; right: 4px; border: 3px solid transparent; }
.select::before { top: 5px; border-top: 0; border-bottom: 4px solid #ddd; }
.select::after { bottom: 5px; border-bottom: 0; border-top: 4px solid #ddd; }
.group { width: 57px; margin: 0 4px; }
.space { width: 105px; margin-left: auto; }
.aligns { display: flex; gap: 8px; padding: 0 5px; color: #999; }
.aligns + .aligns { padding-left: 10px; }
.aligns.last { padding-right: 8px; }
.mode3d { margin-right: 6px; color: #aaa; }
.wide { gap: 6px; padding: 0; }
.wide svg { width: 18px; height: 18px; }

/* workspace */
.workspace { flex: 1; min-height: 0; display: flex; background: #2f2f2f; }
.strip { flex: none; display: flex; align-items: center; height: 13px; padding: 0 5px; background: #3a3a3a; color: #ddd; }
.strip svg { width: 8px; height: 6px; }
.tools { flex: none; width: 41px; border-right: 4px solid #303030; background: #535353; display: flex; flex-direction: column; }
.grip-h { width: 20px; height: 4px; margin: 3px auto; background: repeating-linear-gradient(90deg, #333 0 1px, transparent 1px 2px); }
.tools .grip-h { margin-bottom: 8px; }
.toolset { padding: 0 3px; border-bottom: 1px solid #3c3c3c; margin: 0 0 2px 1px; color: #ccc; }
.plain { border-bottom: 0; }
.tool { position: relative; display: grid; place-items: center; width: 30px; height: 27px; border-radius: 3px; }
.tool svg { width: 18px; height: 18px; }
.tool::after { content: ""; position: absolute; right: 1px; bottom: 2px; border: 2px solid transparent; border-right-color: #bbb; border-bottom-color: #bbb; }
.solo::after { display: none; }
.active { height: 26px; margin-bottom: 1px; background: #373737; border: 1px solid #2a2a2a; }
.mini { display: flex; justify-content: space-between; align-items: center; padding: 0 4px; height: 19px; color: #ccc; }
.mini svg { width: 12px; height: 12px; }
.swatches { flex: none; position: relative; width: 29px; height: 31px; }
.tools .swatches { margin: 0 0 4px 5px; }
.swatches i { position: absolute; width: 19px; height: 20px; border: 1px solid #333; }
.swatches .back { right: 0; bottom: 0; background: #fff; }
.swatches .fore { left: 0; top: 0; background: #000; box-shadow: inset 0 0 0 1px #ddd; }
.modes .tool { height: 28px; }

.center { flex: 1; min-width: 0; display: flex; flex-direction: column; }
.doctabs { flex: none; height: 21px; background: #3c3c3c; border-top: 1px solid #2f2f2f; display: flex; }
.doctab { display: flex; align-items: center; gap: 12px; padding: 0 7px 0 9px; background: #535353; border-right: 1px solid #333; color: #ccc; }
.doctab svg { width: 6px; height: 6px; }
.doc { flex: 1; min-height: 0; display: grid; grid-template: 18px 1fr / 17px 1fr 16px; background: #333; }
.corner { background: #5a5a5a; border: 1px solid #4a4a4a; }
.ruler { width: 100%; height: 100%; overflow: hidden; background: #333; stroke: #777; fill: #aaa; font-size: 11px; }
.ruler text { stroke: none; }
#ruler-x { border-bottom: 1px solid #777; }
#ruler-y { grid-column: 1; grid-row: 2; border-right: 1px solid #777; }
.vscroll { grid-column: 3; grid-row: 1 / 3; background: linear-gradient(90deg, #3a3a3a, #454545); }
.canvas { grid-column: 2; grid-row: 2; display: grid; place-items: center; background: #282828; min-width: 0; min-height: 0; }
.page { width: 361px; height: 666px; background: #fff; box-shadow: 1px 1px 2px #111; }

.status { flex: none; display: flex; height: 17px; line-height: 18px; color: #eee; }
.pct { width: 48px; padding-left: 2px; background: #3f3f3f; }
.info { display: flex; align-items: center; width: 207px; padding: 0 3px 0 2px; background: #535353; }
.info svg { width: 20px; height: 11px; }
.info span { flex: 1; padding-left: 38px; white-space: nowrap; }
.play { border: 5px solid transparent; border-left: 6px solid #fff; border-right: 0; }
.fill { flex: 1; background: linear-gradient(#3a3a3a, #454545); }
.scorner { width: 16px; background: #535353; }

.timeline { flex: none; margin-top: 3px; }
.tabs { display: flex; height: 18px; background: #3a3a3a; border-top: 1px solid #484848; }
.tab { padding: 0 8px; border-right: 1px solid #2f2f2f; color: #999; line-height: 16px; }
.tab.on { background: #535353; color: #e0e0e0; padding: 0 7px; }
.pmenu { width: 14px; height: 10px; margin: 4px 4px 0 auto; color: #ccc; }
.controls { display: flex; height: 39px; background: #535353; border-bottom: 1px solid #3e3e3e; color: #999; }
.controls > div { display: flex; align-items: center; }
.transport { width: 189px; gap: 17px; padding-left: 7px; border-right: 1px solid #3e3e3e; }
.transport svg { width: 14px; height: 10px; }
.controls .big { width: 14px; height: 14px; }
.edit { width: 71px; gap: 15px; padding-left: 9px; border-right: 1px solid #3e3e3e; }
.edit .cut { width: 18px; height: 14px; }
.track { flex: 1; margin-right: 43px; border-right: 1px solid #3e3e3e; }
.tbody { display: flex; align-items: center; justify-content: center; gap: 3px; height: 68px; background: #535353; }
.create { width: 114px; height: 20px; border: 1px solid #333; border-radius: 3px; background: linear-gradient(#737373, #616161); line-height: 16px; }
.more { display: grid; place-items: center; width: 18px; }
.more .tri { border-width: 5px 5px 0; }
.tfoot { display: flex; height: 20px; border-top: 1px solid #3a3a3a; color: #999; }
.tfoot > div { display: flex; align-items: center; background: #535353; }
.tf-left { width: 260px; gap: 12px; padding-left: 6px; border-right: 1px solid #3a3a3a; }
.tf-left svg { width: 14px; height: 12px; }
.tf-left .frames { width: 18px; height: 8px; }
.tf-zoom { width: 158px; gap: 15px; padding-left: 9px; }
.small { width: 10px; height: 6px; }
.large { width: 18px; height: 10px; }
.rail { width: 88px; height: 6px; border-radius: 3px; background: #333; border: 1px solid #2b2b2b; }

/* collapsed panel icons */
.iconcol { flex: none; display: flex; flex-direction: column; width: 43px; border: solid #303030; border-width: 0 3px; background: #535353; }
.iconcol .strip { justify-content: flex-end; }
.icgroup { border-bottom: 2px solid #363636; color: #d0d0d0; padding-bottom: 3px; }
.icgroup button { display: grid; place-items: center; width: 100%; height: 28px; }
.icgroup svg { width: 16px; height: 18px; }
.icgroup .char { font-size: 17px; }

/* right dock */
.dock { flex: none; width: 240px; display: flex; flex-direction: column; gap: 3px; }
.dock .strip { justify-content: flex-end; margin-bottom: -3px; }
.panel { background: #535353; }
.color { height: 134px; }
.mix { display: flex; padding: 11px 0 0 5px; }
.mix .swatches { margin-right: 8px; }
.sliders { display: grid; row-gap: 5px; }
.chan { display: flex; align-items: center; height: 21px; }
.chan label { width: 13px; color: #ddd; }
.chan input[type=text] { width: 39px; height: 21px; padding: 0 2px; border: 1px solid #333; background: #3c3c3c; color: #ddd; }
.chan input[type=range] { appearance: none; width: 122px; height: 17px; margin: 0; outline: 0; background-color: transparent; background-repeat: no-repeat; background-size: 110px 4px, 112px 6px; background-position: 6px 2px, 5px 1px; }
.chan .red { background-image: linear-gradient(90deg, #000, #f00), linear-gradient(#888, #888); }
.chan .green { background-image: linear-gradient(90deg, #000, #0f0), linear-gradient(#888, #888); }
.chan .blue { background-image: linear-gradient(90deg, #000, #00f), linear-gradient(#888, #888); }
.chan input::-webkit-slider-thumb { appearance: none; width: 10px; height: 9px; margin-top: 8px; background: #bbb; clip-path: polygon(50% 0, 100% 60%, 100% 100%, 0 100%, 0 60%); }
.spectrum { display: flex; width: 218px; height: 16px; margin: 10px 0 0 5px; }
.hues { flex: 1; background: linear-gradient(#fff, rgba(255, 255, 255, 0) 50%, rgba(0, 0, 0, 0) 50%, #000), linear-gradient(90deg, #f00, #ff0 16%, #00a030 32%, #00a0f0 49%, #1a1090 65%, #e0007c 81%, #f00); }
.bw { width: 8px; background: linear-gradient(#fff 50%, #000 50%); }

.adjust { height: 134px; }
.adjust p { margin: 6px 9px 10px; color: #eee; }
.adj { display: flex; justify-content: center; gap: 7px; padding-right: 32px; margin-bottom: 12px; color: #ccc; }
.adj svg { width: 17px; height: 16px; }

.layers { flex: 1; min-height: 0; display: flex; flex-direction: column; color: #aaa; }
.layers .tabs { flex: none; }
.lrow { flex: none; display: flex; align-items: center; height: 29px; padding: 0 5px; border-bottom: 1px solid #3e3e3e; white-space: nowrap; }
.lrow .select { background: linear-gradient(#606060, #565656); border-color: #424242; }
.lockrow { height: 31px; padding-bottom: 2px; }
.kind { width: 70px; }
.kind svg { position: absolute; left: 6px; width: 12px; height: 12px; }
.lrow .kind select { padding-left: 21px; }
.kinds { display: flex; gap: 12px; margin-left: 21px; }
.kinds svg { width: 12px; height: 12px; }
.toggle { width: 9px; height: 17px; margin-left: auto; border: 1px solid #3a3a3a; background: linear-gradient(#707070 45%, #444 45%); }
.blend { width: 111px; }
.lrow label { margin-left: auto; }
.num { display: flex; margin-left: 5px; border: 1px solid #424242; border-radius: 2px; }
.num input { width: 35px; height: 19px; padding: 0 2px; border: 0; background: #4a4a4a; color: #777; }
.num button { display: grid; place-items: center; width: 19px; height: 19px; background: #5a5a5a; border-left: 1px solid #424242; }
.num .tri { border-top-color: #aaa; }
.locks { display: flex; gap: 8px; margin-left: 11px; color: #999; }
.locks svg { width: 14px; height: 14px; }
.list { flex: 1; display: flex; align-items: stretch; background: #464646; }
.layer { flex: 1; display: flex; height: 41px; border-bottom: 1px solid #3a3a3a; background: #535353; }
.eye { display: grid; place-items: center; width: 31px; color: #ccc; }
.eye svg { width: 13px; height: 10px; }
.layer-main { flex: 1; display: flex; align-items: center; padding: 0 16px 0 3px; background: #6c7d93; color: #fff; }
.thumb { width: 19px; height: 34px; border: 1px solid #222; background: #fff; }
.layer-main em { flex: 1; margin-left: 11px; font-weight: 500; }
.layer-main svg { width: 12px; height: 14px; color: #ddd; }
.lscroll { width: 15px; background: #3d3d3d; border-left: 1px solid #383838; }
.lfoot { flex: none; display: flex; align-items: center; justify-content: flex-end; gap: 14px; height: 20px; padding-right: 28px; border-top: 1px solid #333; color: #ccc; }
.lfoot svg { width: 13px; height: 12px; }
.lfoot .off, .fx { color: #999; }
.fx { font-style: italic; }

/* overlay brand */
.watermark { position: absolute; left: calc(100% - 446px); bottom: 40px; color: #d0d0d0; }
.wm-top { display: flex; align-items: flex-end; height: 108px; white-space: nowrap; }
.bai { width: 118px; font: 800 76px/66px Inter, sans-serif; }
.paw { position: relative; width: 100px; height: 108px; }
.paw svg { width: 100px; height: 108px; }
.paw span { position: absolute; left: 20px; bottom: 8px; font: bold 44px/44px Inter, sans-serif; color: #525252; }
.jy { margin-left: 4px; font: 900 57px/60px "Noto Sans CJK SC", sans-serif; }
.url { font-size: 40px; line-height: 56px; color: #e0e0e0; text-shadow: 0 0 2px #444; }
```

FILE: rulers.js
```js
// Draws both rulers with their zero at the page's top left corner.
const NS = 'http://www.w3.org/2000/svg';
const page = document.getElementById('page');

function add(svg, name, attrs, text) {
  const el = document.createElementNS(NS, name);
  for (const key in attrs) el.setAttribute(key, attrs[key]);
  if (text !== undefined) el.textContent = text;
  svg.appendChild(el);
}

function draw() {
  const p = page.getBoundingClientRect();
  const rx = document.getElementById('ruler-x');
  const ry = document.getElementById('ruler-y');
  const bx = rx.getBoundingClientRect();
  const by = ry.getBoundingClientRect();
  rx.textContent = '';
  ry.textContent = '';
  const unitX = p.width / 38.1;
  const unitY = p.height / 67.9;
  for (let n = -70; n <= 110; n++) {
    const x = Math.round(p.left - bx.left + n * unitX) + 0.5;
    if (x < -20 || x > bx.width) continue;
    const major = n % 5 === 0;
    add(rx, 'line', { x1: x, x2: x, y1: major ? 0 : 14, y2: 17 });
    if (major) add(rx, 'text', { x: x + 4, y: 11 }, Math.abs(n));
  }
  for (let n = -10; n <= 80; n++) {
    const y = Math.round(p.top - by.top + n * unitY) + 0.5;
    if (y < -10 || y > by.height) continue;
    const major = n % 5 === 0;
    add(ry, 'line', { x1: major ? 0 : 13, x2: 16, y1: y, y2: y });
    if (major && y < by.height - 24) {
      String(Math.abs(n)).split('').forEach((d, i) => add(ry, 'text', { x: 3, y: y + 12 + i * 10 }, d));
    }
  }
}

draw();
addEventListener('resize', draw);
```
